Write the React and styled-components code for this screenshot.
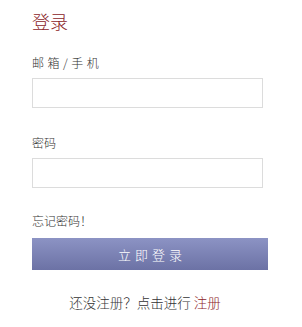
import React from 'react';
import styled, { createGlobalStyle } from 'styled-components';

const GlobalStyle = createGlobalStyle`
  body {
    margin: 0;
    background: #fff;
    font-family: "Noto Sans CJK SC", sans-serif;
    font-weight: 300;
    color: #333;
  }
`;

const LoginBox = styled.div`
  width: 302px;
  padding: 12px 0 0 32px;
  box-sizing: border-box;
`;

const Title = styled.h2`
  margin: 0;
  font-size: 18px;
  line-height: 18px;
  font-weight: 300;
  color: #8b2328;
`;

const Label = styled.div`
  margin-top: ${(p) => p.$top}px;
  font-size: 12px;
  line-height: 14px;
  letter-spacing: ${(p) => p.$spacing || 0}px;
  color: #333;
`;

const Input = styled.input`
  display: block;
  margin-top: 8px;
  width: 231px;
  height: 30px;
  box-sizing: border-box;
  border: 1px solid #dcdcdc;
  outline: none;
  padding: 0 8px;
  font-size: 13px;
`;

const Forgot = styled.div`
  margin-top: 26px;
  font-size: 12px;
  line-height: 14px;
  color: #333;
`;

const SubmitButton = styled.button`
  display: block;
  margin-top: 10px;
  width: 236px;
  height: 32px;
  border: none;
  padding: 0 0 0 4px;
  background: linear-gradient(180deg, #8c93c4 0%, #6c72a5 100%);
  color: #fff;
  font-family: "Noto Sans CJK SC", sans-serif;
  font-weight: 300;
  font-size: 13px;
  letter-spacing: 4px;
  cursor: pointer;
`;

const Footer = styled.div`
  margin-top: 24px;
  width: 226px;
  text-align: center;
  font-size: 13.5px;
  line-height: 16px;
  color: #333;
`;

const RegLink = styled.a`
  color: #8b2328;
  text-decoration: none;
  cursor: pointer;
`;

const App = () => (
  <>
    <GlobalStyle />
    <LoginBox>
      <Title>登录</Title>
      <Label $top={26} $spacing={3.5}>邮箱/手机</Label>
      <Input type="text" />
      <Label $top={28}>密码</Label>
      <Input type="password" />
      <Forgot>忘记密码！</Forgot>
      <SubmitButton>立即登录</SubmitButton>
      <Footer>
        还没注册？点击进行 <RegLink>注册</RegLink>
      </Footer>
    </LoginBox>
  </>
);

export default App;
